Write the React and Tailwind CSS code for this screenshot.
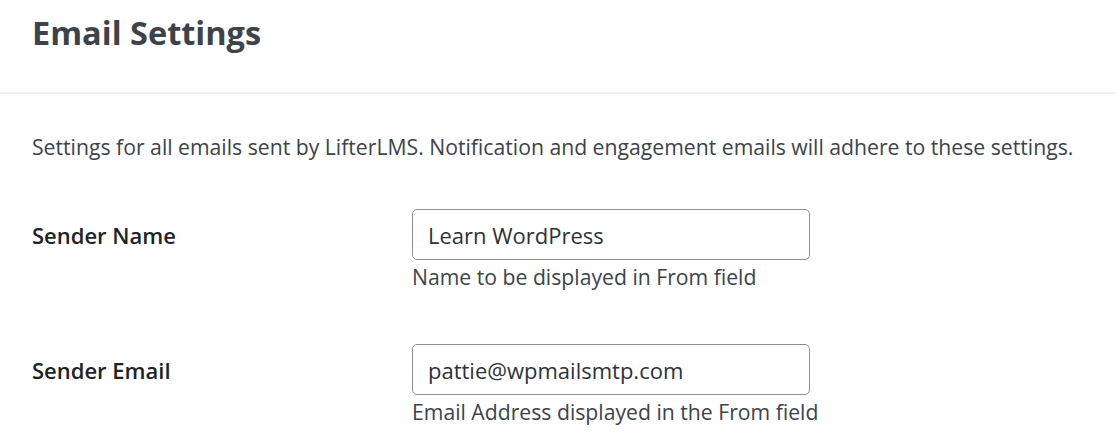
import React from 'react';

const fields = [
  { label: 'Sender Name', value: 'Learn WordPress', help: 'Name to be displayed in From field' },
  { label: 'Sender Email', value: 'pattie@wpmailsmtp.com', help: 'Email Address displayed in the From field' },
];

export default function App() {
  return (
    <div className="w-[1116px] h-[442px] bg-white overflow-hidden font-['Open_Sans',sans-serif] text-[#3c434a]">
      {/* Header */}
      <div className="h-[94px] border-b-2 border-[#f0f0f1] px-[32px] pt-[10px]">
        <h2 className="text-[32.5px] font-bold leading-[46px] text-[#3c434a]">Email Settings</h2>
      </div>

      <div className="px-[32px]">
        <p className="mt-[38px] text-[21.2px] leading-[30px] text-[#3c434a] whitespace-nowrap">
          Settings for all emails sent by LifterLMS. Notification and engagement emails will adhere to these settings.
        </p>

        <div className="mt-[47px] flex flex-col gap-[53px]">
          {fields.map((f) => (
            <div key={f.label} className="flex">
              <label className="w-[380px] pt-[12px] text-[22px] font-semibold leading-[28px] text-[#1d2327]">{f.label}</label>
              <div className="flex flex-col">
                <input
                  readOnly
                  value={f.value}
                  className="w-[398px] h-[51px] rounded-[5px] border border-[#8c8f94] px-[15px] text-[22px] text-[#2c3338] outline-none"
                />
                <span className="mt-[3px] text-[21.2px] leading-[28px] text-[#3c434a] whitespace-nowrap">{f.help}</span>
              </div>
            </div>
          ))}
        </div>
      </div>
    </div>
  );
}
